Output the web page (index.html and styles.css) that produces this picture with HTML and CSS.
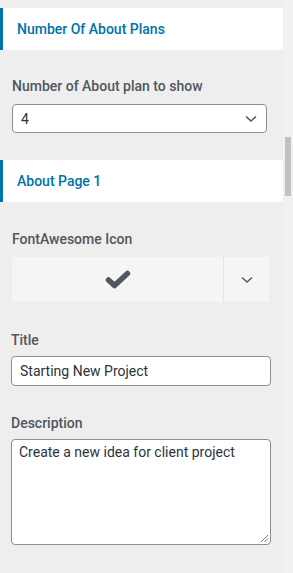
FILE: index.html
```html
<!DOCTYPE html>
<html>
<head>
<meta charset="utf-8">
<link rel="stylesheet" href="styles.css">
</head>
<body>
<div class="frame">
  <div class="panel">
    <div class="section-head">Number Of About Plans</div>
    <div class="field field-first">
      <div class="label">Number of About plan to show</div>
      <div class="select">
        <span>4</span>
        <svg class="chev" width="12" height="8" viewBox="0 0 12 8"><path d="M1 1.5 L6 6 L11 1.5" fill="none" stroke="#50575e" stroke-width="1.6"/></svg>
      </div>
    </div>
    <div class="section-head head-2">About Page 1</div>
    <div class="field field-icon">
      <div class="label">FontAwesome Icon</div>
      <div class="icon-picker">
        <div class="icon-main">
          <svg width="26" height="19" viewBox="0 0 26 19"><path d="M3.5 10 L9.5 15.5 L22.5 3.5" fill="none" stroke="#50575e" stroke-width="5.5" stroke-linecap="round" stroke-linejoin="round"/></svg>
        </div>
        <div class="icon-drop">
          <svg width="12" height="8" viewBox="0 0 12 8"><path d="M1 1.5 L6 6 L11 1.5" fill="none" stroke="#50575e" stroke-width="1.4"/></svg>
        </div>
      </div>
    </div>
    <div class="field field-title">
      <div class="label">Title</div>
      <div class="input">Starting New Project</div>
    </div>
    <div class="field field-desc">
      <div class="label">Description</div>
      <div class="textarea">Create a new idea for client project
        <svg class="grip" width="9" height="9" viewBox="0 0 9 9"><path d="M8 1 L1 8 M8 4.5 L4.5 8" stroke="#7a7a7a" stroke-width="1"/></svg>
      </div>
    </div>
  </div>
  <div class="scrollbar"><div class="thumb"></div></div>
</div>
</body>
</html>
```
FILE: styles.css
```css
html, body { margin: 0; padding: 0; }
body { background: #eeeeee; font-family: Roboto, "Noto Sans", sans-serif; }
.frame { display: flex; width: 293px; height: 573px; overflow: hidden; }
.panel { width: 283px; flex: none; padding-top: 8px; box-sizing: border-box; }
.scrollbar { width: 10px; background: #f1f1f1; display: flex; justify-content: center; }
.thumb { width: 6px; height: 59px; margin-top: 137px; background: #c1c1c1; }
.section-head {
  height: 42px; box-sizing: border-box; background: #fff;
  border-left: 3px solid #0073aa; padding-left: 14px;
  display: flex; align-items: center;
  font-size: 14px; font-weight: 500; color: #0073aa;
}
.head-2 { margin-top: 27px; }
.field { padding: 0 12px; }
.label { font-size: 14px; font-weight: 500; color: #50575e; line-height: 20px; margin-bottom: 8px; }
.field-first { padding-top: 26px; }
.select {
  width: 255px; height: 29px; box-sizing: border-box; background: #fff;
  border: 1px solid #8c8f94; border-radius: 4px;
  display: flex; align-items: center; justify-content: space-between;
  padding: 0 9px 0 8px; font-size: 14px; color: #2c3338;
}
.field-icon { padding-top: 27px; }
.icon-picker { width: 257px; height: 45px; display: flex; background: #f5f5f5; }
.icon-main { flex: 1; display: flex; align-items: center; justify-content: center; border-right: 1px solid #e6e6e6; }
.icon-drop { width: 45px; display: flex; align-items: center; justify-content: center; }
.field-title { padding: 28px 12px 0 11px; }
.field-title .label, .field-desc .label { margin-bottom: 6px; }
.input, .textarea {
  width: 260px; box-sizing: border-box; background: #fff;
  border: 1px solid #8c8f94; border-radius: 4px;
  font-size: 14px; color: #2c3338;
}
.input { height: 30px; padding: 0 8px; display: flex; align-items: center; }
.field-desc { padding: 27px 12px 0 11px; }
.textarea { height: 106px; padding: 2px 7px; position: relative; line-height: 20px; }
.grip { position: absolute; right: 1px; bottom: 1px; }
```
